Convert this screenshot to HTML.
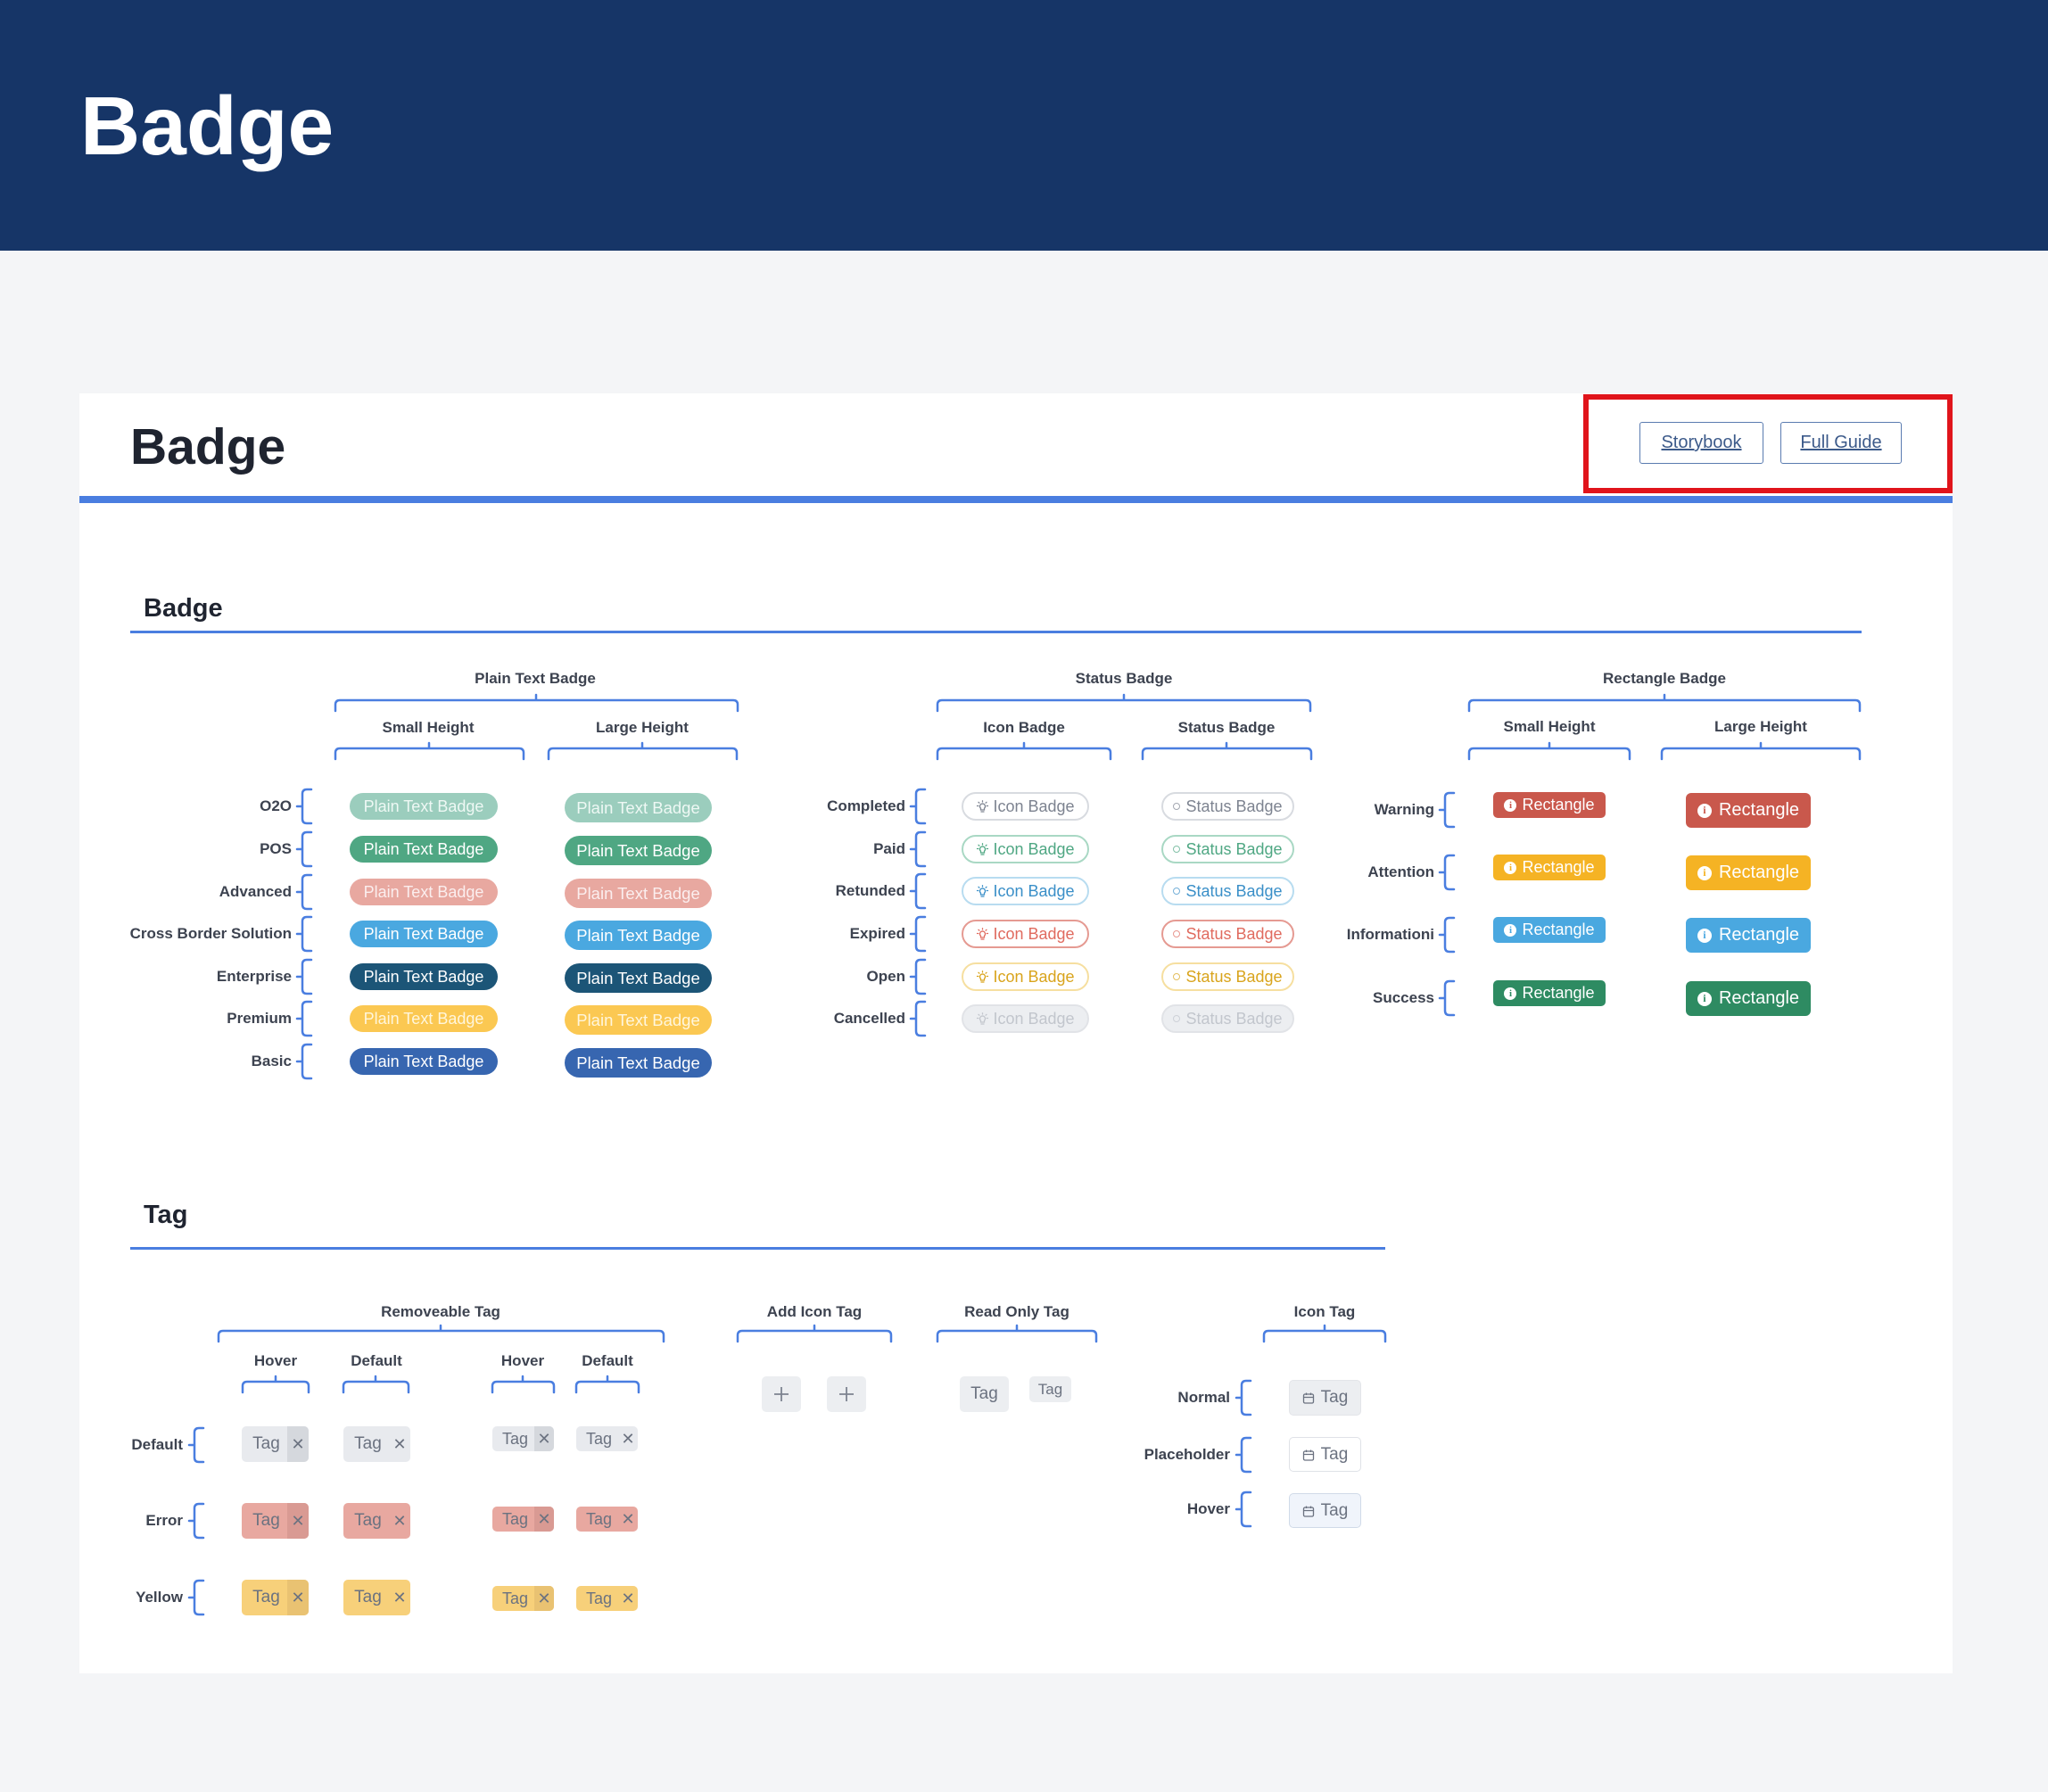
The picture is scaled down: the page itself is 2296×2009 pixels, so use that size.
<!DOCTYPE html>
<html><head><meta charset="utf-8"><style>
*{margin:0;padding:0;box-sizing:border-box}
body{width:2296px;height:2009px;background:#f4f5f7;position:relative;font-family:"Liberation Sans",sans-serif;overflow:hidden}
.hd{position:absolute;left:0;top:0;width:2296px;height:281px;background:#163567}
.hd h1{position:absolute;left:90px;top:86px;font-size:93px;font-weight:700;color:#fff;line-height:110px}
.card{position:absolute;left:89px;top:441px;width:2100px;height:1435px;background:#fff}
.a{position:absolute}
.t{position:absolute;font-weight:700;font-size:17px;color:#3d4350;line-height:22px;white-space:nowrap}
.c{width:300px;text-align:center}
.r{text-align:right}
.p{position:absolute;display:flex;align-items:center;justify-content:center;color:#fff;white-space:nowrap}
.ps{width:166px;height:30px;border-radius:15px;font-size:18px;left:392px}
.pl{width:165px;height:33px;border-radius:17px;font-size:18.5px;left:633px}
.ib{left:1078px;width:143px;height:32px;border-radius:16px;border:2px solid;font-size:18px;background:#fff;gap:4px}
.sb{left:1302px;width:149px;height:32px;border-radius:16px;border:2px solid;font-size:18px;background:#fff;gap:6px}
.sb i{width:8px;height:8px;border-radius:50%;border:1.5px solid currentColor;display:inline-block;opacity:.7}
.rs{left:1674px;width:126px;height:29px;border-radius:5px;font-size:18px;gap:6px}
.rl{left:1890px;width:140px;height:39px;border-radius:6px;font-size:20px;gap:8px}
.inf{width:14px;height:14px;border-radius:50%;background:#fff;display:flex;align-items:center;justify-content:center;font-size:11px;font-weight:700;font-family:"Liberation Serif",serif}
.rl .inf{width:16px;height:16px;font-size:12px}
.tg{position:absolute;display:flex;align-items:center;border-radius:5px;color:#6b7280;overflow:hidden;white-space:nowrap}
.tb{width:75px;height:40px;font-size:19px}
.tsm{width:69px;height:28px;font-size:18px}
.tg span{flex:1;text-align:center;padding-left:4px}
.tg b{font-weight:400;width:24px;height:100%;display:flex;align-items:center;justify-content:center;font-size:18px}
.tsm b{width:22px}
.btn{position:absolute;top:473px;height:47px;border:1.5px solid #5a7bb0;border-radius:3px;color:#3c5a8a;font-size:20px;display:flex;align-items:center;justify-content:center;text-decoration:underline;background:#fff}
</style></head><body>
<div class="hd"><h1>Badge</h1></div>
<div class="card"></div>
<div class="t" style="left:146px;top:467px;font-size:57px;line-height:68px;color:#1f2430">Badge</div>
<div class="a" style="left:89px;top:556px;width:2100px;height:8px;background:#4a7ee0"></div>
<div class="btn" style="left:1838px;width:139px">Storybook</div>
<div class="btn" style="left:1996px;width:136px">Full Guide</div>
<div class="a" style="left:1775px;top:442px;width:414px;height:111px;border:6px solid #e0141b"></div>

<div class="t" style="left:161px;top:664px;font-size:29px;line-height:36px;color:#1f2430">Badge</div>
<div class="a" style="left:146px;top:707px;width:1941px;height:3px;background:#4a7ee0"></div>
<div class="t" style="left:161px;top:1344px;font-size:29px;line-height:36px;color:#1f2430">Tag</div>
<div class="a" style="left:146px;top:1398px;width:1407px;height:3px;background:#4a7ee0"></div>

<svg class="a" style="left:0;top:0" width="2296" height="2009" fill="none" stroke="#4a7ee0" stroke-width="2.5" stroke-linecap="round">
<defs><path id="vb" d="M0 0H6M16 -19H11Q6 -19 6 -14V14Q6 19 11 19H16"/></defs>
<path d="M376 797V790Q376 785 381 785H822Q827 785 827 790V797M601 785V779"/>
<path d="M376 851V844Q376 839 381 839H582Q587 839 587 844V851M481 839V833"/>
<path d="M615 851V844Q615 839 620 839H821Q826 839 826 844V851M720 839V833"/>
<path d="M1051 797V790Q1051 785 1056 785H1464Q1469 785 1469 790V797M1260 785V779"/>
<path d="M1051 851V844Q1051 839 1056 839H1240Q1245 839 1245 844V851M1148 839V833"/>
<path d="M1281 851V844Q1281 839 1286 839H1465Q1470 839 1470 844V851M1375 839V833"/>
<path d="M1647 797V790Q1647 785 1652 785H2080Q2085 785 2085 790V797M1866 785V779"/>
<path d="M1647 851V844Q1647 839 1652 839H1822Q1827 839 1827 844V851M1737 839V833"/>
<path d="M1863 851V844Q1863 839 1868 839H2080Q2085 839 2085 844V851M1974 839V833"/>
<path d="M245 1504V1497Q245 1492 250 1492H739Q744 1492 744 1497V1504M494 1492V1486"/>
<path d="M827 1504V1497Q827 1492 832 1492H994Q999 1492 999 1497V1504M913 1492V1486"/>
<path d="M1051 1504V1497Q1051 1492 1056 1492H1224Q1229 1492 1229 1497V1504M1140 1492V1486"/>
<path d="M1417 1504V1497Q1417 1492 1422 1492H1548Q1553 1492 1553 1497V1504M1485 1492V1486"/>
<path d="M272 1561V1554Q272 1549 277 1549H341Q346 1549 346 1554V1561M309 1549V1543"/>
<path d="M385 1561V1554Q385 1549 390 1549H453Q458 1549 458 1554V1561M421 1549V1543"/>
<path d="M552 1561V1554Q552 1549 557 1549H616Q621 1549 621 1554V1561M586 1549V1543"/>
<path d="M646 1561V1554Q646 1549 651 1549H711Q716 1549 716 1554V1561M681 1549V1543"/>
<use href="#vb" x="333" y="904"/><use href="#vb" x="333" y="952"/><use href="#vb" x="333" y="1000"/><use href="#vb" x="333" y="1047"/><use href="#vb" x="333" y="1095"/><use href="#vb" x="333" y="1142"/><use href="#vb" x="333" y="1190"/>
<use href="#vb" x="1021" y="904"/><use href="#vb" x="1021" y="952"/><use href="#vb" x="1021" y="999"/><use href="#vb" x="1021" y="1047"/><use href="#vb" x="1021" y="1095"/><use href="#vb" x="1021" y="1142"/>
<use href="#vb" x="1614" y="908"/><use href="#vb" x="1614" y="978"/><use href="#vb" x="1614" y="1048"/><use href="#vb" x="1614" y="1119"/>
<use href="#vb" x="212" y="1620"/><use href="#vb" x="212" y="1705"/><use href="#vb" x="212" y="1791"/>
<use href="#vb" x="1386" y="1567"/><use href="#vb" x="1386" y="1631"/><use href="#vb" x="1386" y="1692"/>
</svg>

<div class="t c" style="left:450px;top:750px">Plain Text Badge</div>
<div class="t c" style="left:330px;top:805px">Small Height</div>
<div class="t c" style="left:570px;top:805px">Large Height</div>
<div class="t c" style="left:1110px;top:750px">Status Badge</div>
<div class="t c" style="left:998px;top:805px">Icon Badge</div>
<div class="t c" style="left:1225px;top:805px">Status Badge</div>
<div class="t c" style="left:1716px;top:750px">Rectangle Badge</div>
<div class="t c" style="left:1587px;top:804px">Small Height</div>
<div class="t c" style="left:1824px;top:804px">Large Height</div>

<div class="t r" style="right:1969px;top:893px">O2O</div>
<div class="t r" style="right:1969px;top:941px">POS</div>
<div class="t r" style="right:1969px;top:989px">Advanced</div>
<div class="t r" style="right:1969px;top:1036px">Cross Border Solution</div>
<div class="t r" style="right:1969px;top:1084px">Enterprise</div>
<div class="t r" style="right:1969px;top:1131px">Premium</div>
<div class="t r" style="right:1969px;top:1179px">Basic</div>

<div class="p ps" style="top:889px;background:#9bcdbd;color:#eef8f4">Plain Text Badge</div>
<div class="p ps" style="top:937px;background:#4fa783">Plain Text Badge</div>
<div class="p ps" style="top:985px;background:#e8a8a0;color:#fbeeee">Plain Text Badge</div>
<div class="p ps" style="top:1032px;background:#4aa8e0">Plain Text Badge</div>
<div class="p ps" style="top:1080px;background:#1c5577">Plain Text Badge</div>
<div class="p ps" style="top:1127px;background:#fbc852;color:#fff6dc">Plain Text Badge</div>
<div class="p ps" style="top:1175px;background:#3766b0">Plain Text Badge</div>
<div class="p pl" style="top:889px;background:#9bcdbd;color:#eef8f4">Plain Text Badge</div>
<div class="p pl" style="top:937px;background:#4fa783">Plain Text Badge</div>
<div class="p pl" style="top:985px;background:#e8a8a0;color:#fbeeee">Plain Text Badge</div>
<div class="p pl" style="top:1032px;background:#4aa8e0">Plain Text Badge</div>
<div class="p pl" style="top:1080px;background:#1c5577">Plain Text Badge</div>
<div class="p pl" style="top:1127px;background:#fbc852;color:#fff6dc">Plain Text Badge</div>
<div class="p pl" style="top:1175px;background:#3766b0">Plain Text Badge</div>

<div class="t r" style="right:1281px;top:893px">Completed</div>
<div class="t r" style="right:1281px;top:941px">Paid</div>
<div class="t r" style="right:1281px;top:988px">Retunded</div>
<div class="t r" style="right:1281px;top:1036px">Expired</div>
<div class="t r" style="right:1281px;top:1084px">Open</div>
<div class="t r" style="right:1281px;top:1131px">Cancelled</div>

<svg width="0" height="0" style="position:absolute"><defs><g id="bulb" fill="none" stroke="currentColor" stroke-width="1.3" stroke-linecap="round"><path d="M5.5 11h4M6 13h3M7.5 4a3 3 0 0 0-2 5.2V11h4V9.2A3 3 0 0 0 7.5 4M7.5 0.8v1.2M1.5 6.5h1.3M12.2 6.5h1.3M3 2.3l.9.9M12 2.3l-.9.9"/></g></defs></svg>
<div class="p ib" style="top:888px;border-color:#d8dbe0;color:#7d8390"><svg width="15" height="15"><use href="#bulb"/></svg>Icon Badge</div>
<div class="p ib" style="top:936px;border-color:#a9d8c4;color:#4fa783"><svg width="15" height="15"><use href="#bulb"/></svg>Icon Badge</div>
<div class="p ib" style="top:983px;border-color:#b8dcf0;color:#3a8fc8"><svg width="15" height="15"><use href="#bulb"/></svg>Icon Badge</div>
<div class="p ib" style="top:1031px;border-color:#e59a92;color:#e06b5f"><svg width="15" height="15"><use href="#bulb"/></svg>Icon Badge</div>
<div class="p ib" style="top:1079px;border-color:#f6dfa0;color:#d9a41c"><svg width="15" height="15"><use href="#bulb"/></svg>Icon Badge</div>
<div class="p ib" style="top:1126px;border-color:#e1e3e7;color:#c2c6cd;background:#eceef1"><svg width="15" height="15"><use href="#bulb"/></svg>Icon Badge</div>
<div class="p sb" style="top:888px;border-color:#d8dbe0;color:#7d8390"><i></i>Status Badge</div>
<div class="p sb" style="top:936px;border-color:#a9d8c4;color:#4fa783"><i></i>Status Badge</div>
<div class="p sb" style="top:983px;border-color:#b8dcf0;color:#3a8fc8"><i></i>Status Badge</div>
<div class="p sb" style="top:1031px;border-color:#e59a92;color:#e06b5f"><i></i>Status Badge</div>
<div class="p sb" style="top:1079px;border-color:#f6dfa0;color:#d9a41c"><i></i>Status Badge</div>
<div class="p sb" style="top:1126px;border-color:#e1e3e7;color:#c2c6cd;background:#eceef1"><i></i>Status Badge</div>

<div class="t r" style="right:688px;top:897px">Warning</div>
<div class="t r" style="right:688px;top:967px">Attention</div>
<div class="t r" style="right:688px;top:1037px">Informationi</div>
<div class="t r" style="right:688px;top:1108px">Success</div>
<div class="p rs" style="top:888px;background:#c9584c"><span class="inf" style="color:#c9584c">i</span>Rectangle</div>
<div class="p rs" style="top:958px;background:#f5b324"><span class="inf" style="color:#f5b324">i</span>Rectangle</div>
<div class="p rs" style="top:1028px;background:#4aa8e0"><span class="inf" style="color:#4aa8e0">i</span>Rectangle</div>
<div class="p rs" style="top:1099px;background:#2e8b62"><span class="inf" style="color:#2e8b62">i</span>Rectangle</div>
<div class="p rl" style="top:889px;background:#c9584c"><span class="inf" style="color:#c9584c">i</span>Rectangle</div>
<div class="p rl" style="top:959px;background:#f5b324"><span class="inf" style="color:#f5b324">i</span>Rectangle</div>
<div class="p rl" style="top:1029px;background:#4aa8e0"><span class="inf" style="color:#4aa8e0">i</span>Rectangle</div>
<div class="p rl" style="top:1100px;background:#2e8b62"><span class="inf" style="color:#2e8b62">i</span>Rectangle</div>

<div class="t c" style="left:344px;top:1460px">Removeable Tag</div>
<div class="t c" style="left:763px;top:1460px">Add Icon Tag</div>
<div class="t c" style="left:990px;top:1460px">Read Only Tag</div>
<div class="t c" style="left:1335px;top:1460px">Icon Tag</div>
<div class="t c" style="left:159px;top:1515px">Hover</div>
<div class="t c" style="left:272px;top:1515px">Default</div>
<div class="t c" style="left:436px;top:1515px">Hover</div>
<div class="t c" style="left:531px;top:1515px">Default</div>

<div class="t r" style="right:2091px;top:1609px">Default</div>
<div class="t r" style="right:2091px;top:1694px">Error</div>
<div class="t r" style="right:2091px;top:1780px">Yellow</div>

<div class="tg tb" style="left:271px;top:1599px;background:#e8eaee"><span>Tag</span><b style="background:#d5d8dd">✕</b></div>
<div class="tg tb" style="left:385px;top:1599px;background:#e8eaee"><span>Tag</span><b>✕</b></div>
<div class="tg tsm" style="left:552px;top:1599px;background:#e8eaee"><span>Tag</span><b style="background:#d5d8dd">✕</b></div>
<div class="tg tsm" style="left:646px;top:1599px;background:#e8eaee"><span>Tag</span><b>✕</b></div>
<div class="tg tb" style="left:271px;top:1685px;background:#e8a8a0"><span>Tag</span><b style="background:#d99a93">✕</b></div>
<div class="tg tb" style="left:385px;top:1685px;background:#e8a8a0"><span>Tag</span><b>✕</b></div>
<div class="tg tsm" style="left:552px;top:1689px;background:#e8a8a0"><span>Tag</span><b style="background:#d99a93">✕</b></div>
<div class="tg tsm" style="left:646px;top:1689px;background:#e8a8a0"><span>Tag</span><b>✕</b></div>
<div class="tg tb" style="left:271px;top:1771px;background:#f7d07a"><span>Tag</span><b style="background:#e9c272">✕</b></div>
<div class="tg tb" style="left:385px;top:1771px;background:#f7d07a"><span>Tag</span><b>✕</b></div>
<div class="tg tsm" style="left:552px;top:1778px;background:#f7d07a"><span>Tag</span><b style="background:#e9c272">✕</b></div>
<div class="tg tsm" style="left:646px;top:1778px;background:#f7d07a"><span>Tag</span><b>✕</b></div>

<div class="tg" style="left:854px;top:1543px;width:44px;height:40px;background:#eceef1;justify-content:center"><svg width="18" height="18" stroke="#7d8390" stroke-width="1.8"><path d="M9 1V17M1 9H17"/></svg></div>
<div class="tg" style="left:927px;top:1543px;width:44px;height:40px;background:#eceef1;justify-content:center"><svg width="18" height="18" stroke="#7d8390" stroke-width="1.8"><path d="M9 1V17M1 9H17"/></svg></div>
<div class="tg" style="left:1076px;top:1543px;width:55px;height:40px;background:#eceef1;justify-content:center;font-size:19px">Tag</div>
<div class="tg" style="left:1154px;top:1543px;width:47px;height:29px;background:#eceef1;justify-content:center;font-size:17px">Tag</div>

<div class="t r" style="right:917px;top:1556px">Normal</div>
<div class="t r" style="right:917px;top:1620px">Placeholder</div>
<div class="t r" style="right:917px;top:1681px">Hover</div>
<svg width="0" height="0" style="position:absolute"><defs><g id="cal" fill="none" stroke="#6b7280" stroke-width="1.3"><rect x="1.5" y="3" width="11" height="10" rx="1.5"/><path d="M1.5 6.5H12.5M4.5 1.5V4M9.5 1.5V4"/></g></defs></svg>
<div class="tg" style="left:1445px;top:1547px;width:81px;height:40px;background:#eceef1;justify-content:center;gap:7px;font-size:19px;border:1px solid #e3e5e9"><svg width="14" height="14"><use href="#cal"/></svg>Tag</div>
<div class="tg" style="left:1445px;top:1611px;width:81px;height:39px;background:#fff;justify-content:center;gap:7px;font-size:19px;border:1.5px solid #dfe2e7"><svg width="14" height="14"><use href="#cal"/></svg>Tag</div>
<div class="tg" style="left:1445px;top:1674px;width:81px;height:39px;background:#f0f4fb;justify-content:center;gap:7px;font-size:19px;border:1.5px solid #d0dae8"><svg width="14" height="14"><use href="#cal"/></svg>Tag</div>
</body></html>
